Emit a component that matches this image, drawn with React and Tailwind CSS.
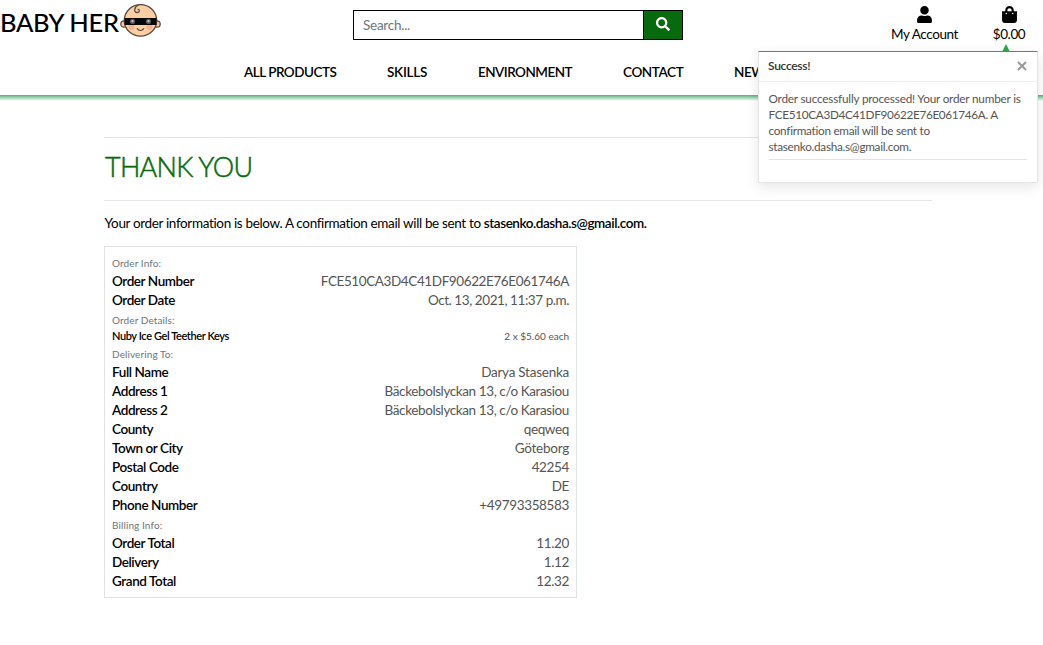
import { FaUser, FaShoppingBag, FaSearch } from "react-icons/fa";

const orderInfo = [
  ["Order Number", "FCE510CA3D4C41DF90622E76E061746A", "tracking-[-0.4px]"],
  ["Order Date", "Oct. 13, 2021, 11:37 p.m.", "tracking-[-0.43px]"],
];
const delivery = [
  ["Full Name", "Darya Stasenka", "tracking-[-0.25px]"],
  ["Address 1", "Bäckebolslyckan 13, c/o Karasiou", "tracking-[-0.4px]"],
  ["Address 2", "Bäckebolslyckan 13, c/o Karasiou", "tracking-[-0.4px]"],
  ["County", "qeqweq"],
  ["Town or City", "Göteborg", "tracking-[-0.25px]"],
  ["Postal Code", "42254"],
  ["Country", "DE"],
  ["Phone Number", "+49793358583"],
];
const billing = [
  ["Order Total", "11.20"],
  ["Delivery", "1.12"],
  ["Grand Total", "12.32"],
];

function BabyLogo() {
  return (
    <svg className="h-[34px] w-[41px]" viewBox="0 0 41 34">
      <g stroke="#5b4a42" strokeWidth="1.3">
        <circle cx="4" cy="20" r="3.2" fill="#f8c9a2" />
        <circle cx="37" cy="20" r="3.2" fill="#f8c9a2" />
        <ellipse cx="20.5" cy="16.4" rx="16.2" ry="15.8" fill="#fbcfa4" />
      </g>
      <circle cx="11.5" cy="23" r="3" fill="#f5a58c" opacity=".75" />
      <circle cx="29.5" cy="23" r="3" fill="#f5a58c" opacity=".75" />
      <path d="M4.5 14H36.5V21H4.5Z" fill="#080808" />
      <circle cx="12.5" cy="17.4" r="2.6" fill="#555" />
      <circle cx="28.5" cy="17.4" r="2.6" fill="#555" />
      <circle cx="12.5" cy="17.2" r="1.1" fill="#ccc" />
      <circle cx="28.5" cy="17.2" r="1.1" fill="#ccc" />
      <path d="M17 24.3Q20.5 28.7 24 24.3" fill="none" stroke="#5b3b30" strokeWidth="1.2" />
      <path d="M18.5 1.2C14 2.5 13.5 8.5 17 8.5C20 8.5 20 4.8 17.5 5.4" fill="none" stroke="#5b4a42" strokeWidth="1.3" />
    </svg>
  );
}

function Row({ label, value, tracking = "tracking-[-0.36px]" }) {
  return (
    <div className="flex h-[19px] items-end justify-between pt-px text-[13.5px] leading-[18px]">
      <span className="font-semibold tracking-[-0.42px] text-black">{label}</span>
      <span className={`font-normal text-[#555] ${tracking}`}>{value}</span>
    </div>
  );
}

function Caption({ children }) {
  return <div className="h-[18px] pt-[2px] text-[10px] leading-[16px] font-normal tracking-[0.1px] text-[#6c757d]">{children}</div>;
}

function Toast() {
  return (
    <div className="absolute top-[44px] left-[758px] w-[280px]">
      <svg className="ml-[244px] block h-[7px] w-[8px]" viewBox="0 0 8 7">
        <path d="M4 0L7.5 7H.5Z" fill="#28a745" />
      </svg>
      <div className="h-[132px] border border-t-[#28a745] border-[#e4e4e4] bg-white shadow-[0_4px_12px_rgba(0,0,0,0.1)]">
        <div className="flex h-[30px] items-center justify-between border-b border-[#eee] px-[9px] pb-[2px]">
          <span className="text-[12px] font-semibold tracking-[-0.3px] text-[#333]">Success!</span>
          <svg className="mr-[1px] h-[10px] w-[10px]" viewBox="0 0 10 10" stroke="#999" strokeWidth="2">
            <path d="M1 1L9 9M9 1L1 9" />
          </svg>
        </div>
        <div className="pr-[10px] pl-[9.5px] pt-[9px]">
          <p className="border-b border-[#e3e3e3] pb-[4px] text-[11.75px] leading-[16px] tracking-[-0.2px] whitespace-nowrap text-[#555]">
            Order successfully processed! Your order number is<br />
            <span className="tracking-[-0.32px]">FCE510CA3D4C41DF90622E76E061746A. A</span><br />
            <span className="tracking-[-0.28px]">confirmation email will be sent to</span><br />
            <span className="tracking-[-0.28px]">stasenko.dasha.s@gmail.com.</span>
          </p>
        </div>
      </div>
    </div>
  );
}

export default function App() {
  return (
    <div className="relative h-[645px] w-[1043px] overflow-hidden bg-white font-['Lato',sans-serif] text-black">
      <header>
        <div className="flex h-[52px] items-start">
          <div className="flex w-[353px] pt-[4px]">
            <span className="w-[120px] text-[25.5px] leading-[36px] font-medium tracking-[-0.35px] whitespace-nowrap">BABY HER</span>
            <BabyLogo />
          </div>
          <div className="mt-[10px] flex h-[30px] w-[330px] border border-black">
            <div className="flex flex-1 items-center border-r border-black pt-px pl-[9px] text-[13.5px] tracking-[-0.25px] text-[#6c757d]">Search...</div>
            <div className="flex w-[38px] items-center justify-center bg-[#076b0d] text-white">
              <FaSearch size={14} className="-mt-0.5" />
            </div>
          </div>
          <div className="ml-[208px] flex w-[67px] flex-col items-center pt-[6px]">
            <FaUser size={17} />
            <span className="mt-[2px] text-[13.5px] leading-[18px] tracking-[-0.4px] whitespace-nowrap">My Account</span>
          </div>
          <div className="ml-[34px] flex w-[34px] flex-col items-center pt-[6px]">
            <FaShoppingBag size={17} />
            <span className="mt-[2px] text-[13.5px] leading-[18px] tracking-[-0.4px]">$0.00</span>
          </div>
        </div>
        <nav className="flex h-[43px] items-center pb-[2px] pl-[244px] text-[13.5px] font-semibold whitespace-nowrap">
          <span className="w-[143px] tracking-[-0.5px]">ALL PRODUCTS</span>
          <span className="w-[91px] tracking-[-0.25px]">SKILLS</span>
          <span className="w-[145px] tracking-[-0.53px]">ENVIRONMENT</span>
          <span className="w-[111px] tracking-[-0.4px]">CONTACT</span>
          <span className="tracking-[-0.4px]">NEW</span>
        </nav>
        <div className="h-[6px] bg-linear-to-b from-[#4fb17c] to-white" />
      </header>

      <main className="ml-[104px] w-[828px] pt-[36px]">
        <h1 className="flex h-[64px] items-center border-y border-[#e5e5e5] pb-[4px] pl-px text-[27px] font-light tracking-[-0.7px] text-[#076b0d] [-webkit-text-stroke:0.5px_#076b0d]">THANK YOU</h1>
        <p className="mt-[11px] h-[22px] pl-[0.5px] text-[13.5px] leading-[22px] font-normal tracking-[-0.35px] whitespace-nowrap">
          Your order information is below. A confirmation email will be sent to <strong className="font-semibold tracking-[-0.43px]">stasenko.dasha.s@gmail.com.</strong>
        </p>
        <section className="mt-[12px] h-[352px] w-[473px] border border-[#dee2e6] px-[7px] pt-[6px]">
          <Caption>Order Info:</Caption>
          {orderInfo.map(([l, v, t]) => <Row key={l} label={l} value={v} tracking={t} />)}
          <div className="h-px" />
          <Caption>Order Details:</Caption>
          <div className="flex h-[16px] items-center justify-between text-[11px]">
            <span className="font-semibold tracking-[-0.4px]">Nuby Ice Gel Teether Keys</span>
            <span className="text-[10px] font-normal text-[#555]">2 x $5.60 each</span>
          </div>
          <Caption>Delivering To:</Caption>
          {delivery.map(([l, v, t]) => <Row key={l} label={l} value={v} tracking={t} />)}
          <div className="h-px" />
          <Caption>Billing Info:</Caption>
          {billing.map(([l, v]) => <Row key={l} label={l} value={v} />)}
        </section>
      </main>
      <Toast />
    </div>
  );
}
